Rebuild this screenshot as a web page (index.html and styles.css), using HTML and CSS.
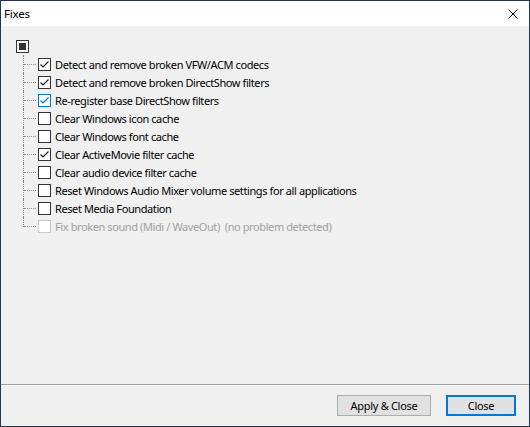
FILE: index.html
```html
<!DOCTYPE html>
<html>
<head>
<meta charset="utf-8">
<link rel="stylesheet" href="styles.css">
</head>
<body>
<div class="window">
  <div class="titlebar">
    <span class="title">Fixes</span>
    <svg class="close-x" width="10" height="10" viewBox="0 0 10 10"><path d="M0.5 0.5 L9.5 9.5 M9.5 0.5 L0.5 9.5" stroke="#000" stroke-width="1" fill="none"/></svg>
  </div>
  <div class="content">
    <div class="tree">
      <div class="root-row"><span class="cb indeterminate"></span></div>
      <ul class="children">
        <li><span class="cb checked"><svg viewBox="0 0 13 13"><path d="M2.5 6.5 L5 9 L10.5 3.5" /></svg></span><span class="label">Detect and remove broken VFW/ACM codecs</span></li>
        <li><span class="cb checked"><svg viewBox="0 0 13 13"><path d="M2.5 6.5 L5 9 L10.5 3.5" /></svg></span><span class="label">Detect and remove broken DirectShow filters</span></li>
        <li><span class="cb checked hot"><svg viewBox="0 0 13 13"><path d="M2.5 6.5 L5 9 L10.5 3.5" /></svg></span><span class="label">Re-register base DirectShow filters</span></li>
        <li><span class="cb"></span><span class="label">Clear Windows icon cache</span></li>
        <li><span class="cb"></span><span class="label">Clear Windows font cache</span></li>
        <li><span class="cb checked"><svg viewBox="0 0 13 13"><path d="M2.5 6.5 L5 9 L10.5 3.5" /></svg></span><span class="label">Clear ActiveMovie filter cache</span></li>
        <li><span class="cb"></span><span class="label">Clear audio device filter cache</span></li>
        <li><span class="cb"></span><span class="label">Reset Windows Audio Mixer volume settings for all applications</span></li>
        <li><span class="cb"></span><span class="label">Reset Media Foundation</span></li>
        <li class="disabled"><span class="cb"></span><span class="label">Fix broken sound (Midi / WaveOut)&nbsp; (no problem detected)</span></li>
      </ul>
    </div>
  </div>
  <div class="footer">
    <button class="btn">Apply &amp; Close</button>
    <button class="btn default">Close</button>
  </div>
</div>
</body>
</html>
```
FILE: styles.css
```css
* { box-sizing: border-box; }
html, body { margin: 0; padding: 0; }
body {
  font-family: "Noto Sans", "Open Sans", sans-serif;
  font-size: 11px;
  letter-spacing: -0.4px;
  color: #000;
  background: #f0f0f0;
}
.window {
  width: 530px;
  height: 427px;
  border: 1px solid #23384e;
  display: flex;
  flex-direction: column;
  background: #f0f0f0;
}
.titlebar {
  height: 25px;
  background: #fff;
  display: flex;
  align-items: center;
  justify-content: space-between;
  padding: 0 11px 0 3px;
  flex: none;
}
.title { font-size: 11.5px; line-height: 16px; letter-spacing: -0.2px; }
.close-x { display: block; }
.content {
  flex: 1;
  padding: 14px 0 0 15px;
}
.root-row { height: 14px; display: flex; }
.cb {
  width: 13px;
  height: 13px;
  border: 1px solid #333;
  background: #fff;
  display: inline-block;
  flex: none;
  position: relative;
}
.cb svg { width: 13px; height: 13px; display: block; position: absolute; left: -1px; top: -1px; }
.cb path { fill: none; stroke: #222; stroke-width: 1.2; }
.cb.hot { border-color: #0078d7; }
.cb.hot path { stroke: #0078d7; }
.cb.indeterminate::after {
  content: "";
  position: absolute;
  left: 2px; top: 2px;
  width: 7px; height: 7px;
  background: #333;
}
.children {
  list-style: none;
  margin: 1px 0 0 7px;
  padding: 0;
}
.children li {
  height: 18px;
  display: flex;
  align-items: center;
  padding-left: 15px;
  position: relative;
  white-space: nowrap;
}
.children li::before {
  content: "";
  position: absolute;
  left: 0; top: 0; bottom: 0;
  border-left: 1px dotted #8a8a8a;
}
.children li:last-child::before { bottom: 8px; }
.children li::after {
  content: "";
  position: absolute;
  left: 1px; top: 9px; width: 12px;
  border-top: 1px dotted #8a8a8a;
}
.label { margin-left: 4px; line-height: 16px; padding-top: 1px; }
.disabled .label { color: #a0a0a0; }
.disabled .cb { border-color: #cccccc; }
.footer {
  flex: none;
  height: 42px;
  border-top: 1px solid #a0a0a0;
  box-shadow: inset 0 1px 0 #fff;
  display: flex;
  justify-content: flex-end;
  align-items: flex-start;
  gap: 15px;
  padding: 10px 13px 0 0;
}
.btn {
  font-family: "Noto Sans", "Open Sans", sans-serif;
  font-size: 11px;
  letter-spacing: -0.3px;
  height: 21px;
  padding: 0;
  background: #e1e1e1;
  border: 1px solid #adadad;
  color: #000;
  line-height: 17px;
}
.btn:first-child { width: 94px; }
.btn.default { width: 70px; border: 2px solid #0078d7; }
```
